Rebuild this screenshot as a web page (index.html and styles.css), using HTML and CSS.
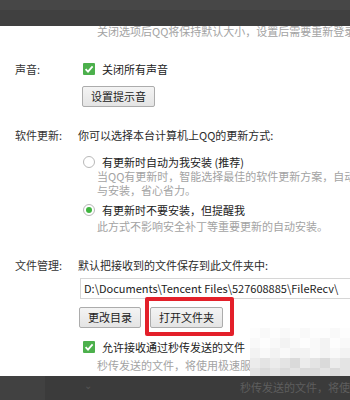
FILE: index.html
```html
<!DOCTYPE html>
<html lang="zh-CN">
<head>
<meta charset="utf-8">
<title>设置</title>
<link rel="stylesheet" href="styles.css">
</head>
<body>
<div class="page">
  <p class="note top-note">关闭选项后QQ将保持默认大小，设置后需要重新登录</p>

  <section class="row sound">
    <div class="label">声音:</div>
    <div class="body">
      <div class="opt"><span class="check"><svg viewBox="0 0 12 12" width="12" height="12"><path d="M2.6 6.2 L5 8.6 L9.6 3.4" fill="none" stroke="#fff" stroke-width="1.8"/></svg></span>关闭所有声音</div>
      <button class="btn btn-sound">设置提示音</button>
    </div>
  </section>

  <section class="row update">
    <div class="label">软件更新:</div>
    <div class="body">
      <div class="lead">你可以选择本台计算机上QQ的更新方式:</div>
      <div class="opt opt-r1"><span class="radio"></span>有更新时自动为我安装 (推荐)</div>
      <p class="note desc1">当QQ有更新时，智能选择最佳的软件更新方案，自动<br>与安装，省心省力。</p>
      <div class="opt opt-r2"><span class="radio on"></span>有更新时不要安装，但提醒我</div>
      <p class="note desc2">此方式不影响安全补丁等重要更新的自动安装。</p>
    </div>
  </section>

  <section class="row files">
    <div class="label">文件管理:</div>
    <div class="body">
      <div class="lead">默认把接收到的文件保存到此文件夹中:</div>
      <div class="path">D:\Documents\Tencent Files\527608885\FileRecv\</div>
      <div class="btns">
        <button class="btn">更改目录</button>
        <span class="mark"><button class="btn">打开文件夹</button><span class="ring"></span></span>
      </div>
      <div class="opt opt-c2"><span class="check"><svg viewBox="0 0 12 12" width="12" height="12"><path d="M2.6 6.2 L5 8.6 L9.6 3.4" fill="none" stroke="#fff" stroke-width="1.8"/></svg></span>允许接收通过秒传发送的文件</div>
      <p class="note desc3">秒传发送的文件，将使用极速服务器帮助接收。能提高</p>
    </div>
  </section>
</div>

<div class="mosaic">
  <span class="m w"></span><span class="m a"></span><span class="m w"></span><span class="m a"></span><span class="m w"></span><span class="m a"></span><span class="m w"></span><span class="m w"></span><span class="m a"></span><span class="m w"></span>
  <span class="m a"></span><span class="m w"></span><span class="m a"></span><span class="m b"></span><span class="m a"></span><span class="m w"></span><span class="m a"></span><span class="m b"></span><span class="m w"></span><span class="m a"></span>
  <span class="m b"></span><span class="m a"></span><span class="m b"></span><span class="m a"></span><span class="m b"></span><span class="m b"></span><span class="m a"></span><span class="m b"></span><span class="m a"></span><span class="m b"></span>
  <span class="m c"></span><span class="m d"></span><span class="m c"></span><span class="m d"></span><span class="m e"></span><span class="m c"></span><span class="m d"></span><span class="m e"></span><span class="m c"></span><span class="m d"></span>
  <span class="m d"></span><span class="m e"></span><span class="m d"></span><span class="m e"></span><span class="m d"></span><span class="m e"></span><span class="m e"></span><span class="m d"></span><span class="m e"></span><span class="m d"></span>
</div>

<div class="topbar"><div class="topband"></div></div>
<div class="bottombar">
  <div class="bb-left"></div>
  <span class="chev">⌄</span>
  <span class="bb-text">秒传发送的文件，将使用极速服</span>
</div>
</body>
</html>
```

FILE: styles.css
```css
html, body {
  margin: 0;
  padding: 0;
  overflow: hidden;
  background: #fff;
}
body {
  width: 350px;
  height: 400px;
  font-family: "Noto Sans CJK SC", "Microsoft YaHei", sans-serif;
  font-size: 11px;
  line-height: 14px;
  color: #2b2b2b;
  position: relative;
}
.page {
  padding-top: 24px;
}
p { margin: 0; }
.note {
  color: #a3a3a3;
  white-space: nowrap;
}
.top-note {
  padding-left: 97px;
}
.row {
  display: grid;
  grid-template-columns: 63px 1fr;
  padding-left: 15px;
}
.label {
  color: #333;
}
.body {
  display: flex;
  flex-direction: column;
  align-items: flex-start;
  min-width: 0;
}
.sound { margin-top: 24px; }
.update { margin-top: 21px; }
.files { margin-top: 25px; }

.opt {
  display: flex;
  align-items: center;
  color: #222;
  white-space: nowrap;
}
.check {
  width: 12px;
  height: 12px;
  background: #4cb04c;
  border-radius: 1px;
  margin-left: 5px;
  margin-right: 7px;
  display: inline-flex;
}
.radio {
  width: 10px;
  height: 10px;
  border: 1px solid #b8b8b8;
  border-radius: 50%;
  margin-left: 5px;
  margin-right: 7px;
  box-sizing: content-box;
  background: #fff;
  position: relative;
}
.radio.on::after {
  content: "";
  position: absolute;
  left: 2px;
  top: 2px;
  width: 6px;
  height: 6px;
  border-radius: 50%;
  background: #3fb53f;
}
.btn {
  height: 21px;
  padding: 0 8px;
  border: 1px solid #acacac;
  border-radius: 2px;
  background: linear-gradient(#f4f4f4, #e4e4e4);
  font-family: inherit;
  font-size: 11px;
  color: #222;
  line-height: 19px;
  box-sizing: border-box;
}
.btn-sound {
  margin-top: 10px;
  margin-left: 4px;
}
.opt-r1 { margin-top: 13px; }
.desc1 { padding-left: 19px; }
.opt-r2 { margin-top: 6px; }
.desc2 { padding-left: 19px; margin-top: 2px; }

.path {
  margin-top: 6px;
  margin-left: 2px;
  width: 290px;
  height: 21px;
  box-sizing: border-box;
  border: 1px solid #d6d6d6;
  padding: 0 3px;
  font-size: 11px;
  line-height: 19px;
  color: #222;
  white-space: nowrap;
  overflow: hidden;
}
.btns {
  margin-top: 8px;
  margin-left: 1px;
  display: flex;
  gap: 9px;
}
.mark {
  position: relative;
  display: inline-flex;
}
.ring {
  position: absolute;
  left: -5px;
  top: -10px;
  right: -11px;
  bottom: -8px;
  border: 4px solid #e3202a;
  border-radius: 2px;
}
.opt-c2 { margin-top: 12px; }
.desc3 { padding-left: 19px; margin-top: 4px; }

.mosaic {
  position: absolute;
  left: 250px;
  top: 328px;
  display: grid;
  grid-template-columns: repeat(10, 10px);
  grid-auto-rows: 10px;
}
.m.w { background: #fdfdfd; }
.m.a { background: #f9f9f9; }
.m.b { background: #f3f3f3; }
.m.c { background: #ececec; }
.m.d { background: #e4e4e4; }
.m.e { background: #dadada; }

.topbar {
  position: absolute;
  left: 0;
  top: 0;
  width: 350px;
  height: 26px;
  background: #404040;
}
.topband {
  height: 10px;
  background: #474747;
}
.bottombar {
  position: absolute;
  left: 0;
  top: 376px;
  width: 350px;
  height: 24px;
  background: #3b3b3b;
}
.bb-left {
  position: absolute;
  left: 0;
  top: 0;
  width: 45px;
  height: 24px;
  background: #414141;
}
.chev {
  position: absolute;
  left: 84px;
  top: 2px;
  color: #555;
  font-size: 10px;
}
.bb-text {
  position: absolute;
  left: 240px;
  top: 4px;
  color: #5e5e5e;
  font-size: 11px;
  white-space: nowrap;
}
```
